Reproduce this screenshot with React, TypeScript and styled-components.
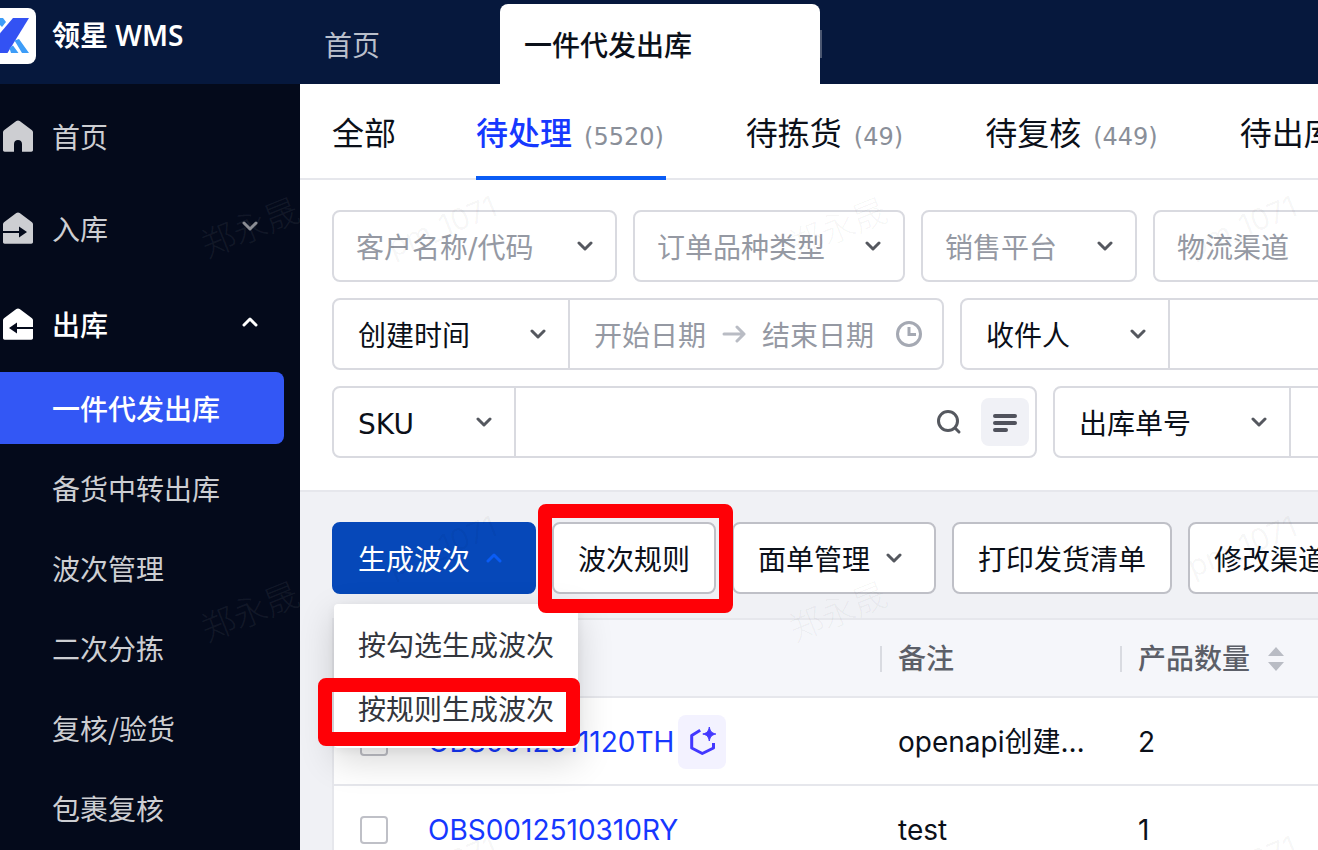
import React from "react";
import styled, { createGlobalStyle, css } from "styled-components";

const cjk = `"Noto Sans CJK SC", sans-serif`;
const uiFont = `"DejaVu Sans", ${cjk}`;
const dataFont = `Inter, ${cjk}`;

const GlobalStyle = createGlobalStyle`
  *, *::before, *::after { box-sizing: border-box; }
  body { margin: 0; font-family: ${cjk}; font-size: 28px; line-height: 40px; color: #0b1019; }
  button, input, select { font: inherit; color: inherit; }
  a { color: inherit; text-decoration: none; }
  ul { list-style: none; margin: 0; padding: 0; }
  svg { flex: none; }
`;

const Shell = styled.div`
  position: relative;
  display: flex;
  flex-direction: column;
  height: 100vh;
  overflow: hidden;
  background: #fff;
`;

const TopBar = styled.header`
  display: flex;
  flex: none;
  height: 84px;
  background: #06183d;
`;

const Brand = styled.div`
  display: flex;
  flex: none;
  gap: 16px;
  width: 300px;
  padding-top: 8px;
  color: #fff;
  font-family: "Noto Sans", ${cjk};
  font-weight: 600;
  line-height: 54px;
`;

const Logo = styled.svg`
  display: block;
  width: 36px;
  height: 56px;
`;

const PageTabs = styled.nav`
  display: flex;
  align-items: flex-end;
`;

const PageTab = styled.a<{ $active?: boolean }>`
  display: flex;
  align-items: center;
  width: ${(p) => (p.$active ? 320 : 200)}px;
  height: 80px;
  padding: 0 24px;
  border-radius: 8px 8px 0 0;
  color: ${(p) => (p.$active ? "#0b1019" : "#b9bfcb")};
  background: ${(p) => (p.$active ? "#fff" : "transparent")};
  font-weight: ${(p) => (p.$active ? 500 : 400)};
`;

const PageTabRule = styled.span`
  align-self: center;
  width: 2px;
  height: 28px;
  margin-top: 4px;
  background: #4b5771;
`;

const Body = styled.div`
  display: flex;
  flex: 1;
  min-height: 0;
`;

const Sidebar = styled.nav`
  flex: none;
  width: 300px;
  padding-top: 6px;
  background: #040a1b;
  overflow: hidden;
`;

const MenuLink = styled.a<{ $open?: boolean }>`
  display: flex;
  align-items: center;
  gap: 18px;
  height: ${(p) => (p.$open ? 96 : 92)}px;
  margin-top: ${(p) => (p.$open ? 2 : 0)}px;
  padding: 0 42px 0 2px;
  color: ${(p) => (p.$open ? "#fff" : "#cdced2")};
  font-weight: ${(p) => (p.$open ? 500 : 400)};
  > span { flex: 1; }
  > span + svg { margin-bottom: 4px; }
`;

const SubList = styled.ul`
  display: flex;
  flex-direction: column;
  gap: 8px;
`;

const SubLink = styled.a<{ $active?: boolean }>`
  display: block;
  height: 72px;
  margin-right: 16px;
  padding-left: 52px;
  border-radius: 0 8px 8px 0;
  line-height: 72px;
  color: ${(p) => (p.$active ? "#fff" : "#cdced2")};
  background: ${(p) => (p.$active ? "#3357f5" : "transparent")};
  font-weight: ${(p) => (p.$active ? 500 : 400)};
`;

const Main = styled.main`
  flex: 1;
  min-width: 0;
  overflow: hidden;
`;

const StatusTabs = styled.nav`
  display: flex;
  gap: 80px;
  height: 96px;
  padding: 0 32px;
  border-bottom: 2px solid #e6e7ec;
`;

const StatusTab = styled.a<{ $active?: boolean }>`
  display: flex;
  flex: none;
  align-items: baseline;
  gap: 12px;
  height: 96px;
  padding-top: 25px;
  font-size: 32px;
  line-height: 44px;
  white-space: nowrap;
  ${(p) =>
    p.$active &&
    css`
      color: #1638ff;
      font-weight: 500;
      border-bottom: 4px solid #0a5cf5;
    `}
`;

const Count = styled.span`
  padding-right: 2px;
  color: #8a8f99;
  font-family: ${uiFont};
  font-size: 24px;
  font-weight: 400;
`;

const Filters = styled.form`
  display: flex;
  flex-direction: column;
  gap: 16px;
  padding: 30px 0 32px 32px;
  border-bottom: 2px solid #e6e7ec;
`;

const FilterRow = styled.div`
  display: flex;
  gap: 16px;
`;

const Group = styled.div<{ $w: number }>`
  display: flex;
  flex: none;
  align-items: center;
  width: ${(p) => p.$w}px;
  height: 72px;
  border: 2px solid #d9dae0;
  border-radius: 8px;
  background: #fff;
`;

const Picker = styled.label<{ $w?: number; $muted?: boolean }>`
  display: grid;
  flex: ${(p) => (p.$w ? "none" : 1)};
  grid-template-columns: 1fr 16px 22px;
  align-items: center;
  width: ${(p) => (p.$w ? `${p.$w}px` : "auto")};
  height: 68px;
  border-right: ${(p) => (p.$w ? "2px solid #d9dae0" : "0")};
  color: ${(p) => (p.$muted ? "#9599a3" : "#0b1019")};
  > select { grid-area: 1 / 1 / 2 / 4; }
  > svg { grid-area: 1 / 2 / 2 / 3; pointer-events: none; }
`;

const Select = styled.select<{ $inset?: number }>`
  appearance: none;
  width: 100%;
  height: 68px;
  padding: 6px 40px 0 ${(p) => p.$inset ?? 22}px;
  border: 0;
  outline: 0;
  background: transparent;
  font-family: ${uiFont};
`;

const TextInput = styled.input<{ $w?: number }>`
  flex: ${(p) => (p.$w ? "none" : 1)};
  width: ${(p) => (p.$w ? `${p.$w}px` : "auto")};
  min-width: 0;
  height: 64px;
  padding: 0;
  border: 0;
  outline: 0;
  background: transparent;
  &::placeholder { color: #9599a3; opacity: 1; }
`;

const DateRange = styled.div`
  display: flex;
  flex: 1;
  align-items: center;
  gap: 16px;
  min-width: 0;
  padding: 0 20px 0 24px;
`;

const IconButton = styled.button<{ $filled?: boolean }>`
  display: grid;
  place-items: center;
  width: 48px;
  height: 48px;
  margin-right: ${(p) => (p.$filled ? 6 : 8)}px;
  padding: 0;
  border: 0;
  border-radius: 8px;
  background: ${(p) => (p.$filled ? "#f0f1f6" : "transparent")};
`;

const ListArea = styled.section`
  min-height: 100%;
  padding: 30px 0 0 32px;
  background: #f0f1f5;
`;

const Toolbar = styled.div`
  display: flex;
  gap: 16px;
  margin-bottom: 24px;
`;

const Anchor = styled.div`
  position: relative;
  flex: none;
`;

const ToolButton = styled.button<{ $primary?: boolean }>`
  display: flex;
  align-items: center;
  gap: 16px;
  height: 72px;
  padding: 0 24px;
  border: 2px solid ${(p) => (p.$primary ? "#0648b9" : "#bfc0c7")};
  border-radius: 8px;
  color: ${(p) => (p.$primary ? "#fff" : "#0b1019")};
  background: ${(p) => (p.$primary ? "#0648b9" : "#fff")};
  white-space: nowrap;
  > svg { margin-right: 8px; }
`;

const Dropdown = styled.ul`
  position: absolute;
  z-index: 2;
  top: 82px;
  left: 2px;
  width: 244px;
  padding: 8px 0;
  border-radius: 4px;
  background: #fff;
  box-shadow: 0 12px 36px rgba(0, 0, 0, 0.16), 0 2px 8px rgba(0, 0, 0, 0.06);
`;

const DropItem = styled.button`
  display: block;
  width: 100%;
  height: 64px;
  padding: 0 24px;
  border: 0;
  background: transparent;
  color: #33363d;
  text-align: left;
  white-space: nowrap;
`;

const Highlight = styled.span<{ $inset: string }>`
  position: absolute;
  z-index: 3;
  inset: ${(p) => p.$inset};
  border: 14px solid #ff0006;
  border-radius: 8px;
  pointer-events: none;
`;

const Table = styled.table`
  width: 100%;
  table-layout: fixed;
  border-collapse: separate;
  border-spacing: 0;
  border-left: 2px solid #e6e7ec;
  border-top: 2px solid #e6e7ec;
  background: #fff;
  font-family: ${dataFont};
`;

const HeadCell = styled.th`
  height: 78px;
  padding: 2px 0 0 16px;
  border-bottom: 2px solid #e6e7ec;
  background: #f5f6fa;
  color: #5c5f68;
  font-weight: 500;
  text-align: left;
`;

const HeadLabel = styled.div`
  display: flex;
  align-items: center;
  gap: 18px;
  height: 26px;
  margin-left: -18px;
  padding-left: 16px;
  border-left: 2px solid #d9dbe1;
`;

const Cell = styled.td`
  height: 88px;
  padding: 2px 0 0 16px;
  border-bottom: 2px solid #e6e7ec;
  white-space: nowrap;
`;

const Check = styled.input`
  appearance: none;
  display: block;
  width: 28px;
  height: 28px;
  margin: 0 0 0 10px;
  border: 2px solid #bfc0c7;
  border-radius: 4px;
  background: #fff;
`;

const OrderCell = styled.div`
  display: flex;
  align-items: center;
  gap: 4px;
  color: #1638ff;
`;

const Tag = styled.span`
  display: grid;
  place-items: center;
  width: 48px;
  height: 54px;
  border-radius: 8px;
  background: #f3f2ff;
`;

const Watermarks = styled.div`
  position: absolute;
  z-index: 5;
  inset: 0;
  overflow: hidden;
  pointer-events: none;
`;

const Mark = styled.span<{ $x: number; $y: number; $dark?: boolean; $name?: boolean }>`
  position: absolute;
  left: ${(p) => p.$x}px;
  top: ${(p) => p.$y}px;
  width: 120px;
  color: ${(p) => (p.$dark ? "rgba(150, 155, 165, 0.1)" : "rgba(0, 0, 0, 0.04)")};
  font-family: Inter, ${cjk};
  font-size: ${(p) => (p.$name ? 34 : 30)}px;
  font-weight: ${(p) => (p.$name ? 300 : 400)};
  text-align: center;
  transform: rotate(-22deg);
`;

const Chevron = ({ up, color = "#55585f" }: { up?: boolean; color?: string }) => (
  <svg width="16" height="12" viewBox="0 0 16 12" fill="none" aria-hidden="true">
    <path d={up ? "M2 9 8 3l6 6" : "M2 3l6 6 6-6"} stroke={color} strokeWidth="3" strokeLinecap="round" strokeLinejoin="round" />
  </svg>
);

const HouseIcon = ({ kind, color = "#cdced2" }: { kind: "home" | "in" | "out"; color?: string }) => (
  <svg width="32" height="32" viewBox="0 0 32 32" aria-hidden="true">
    <path d="M16 .5c.6 0 1.200.2 1.700.6L30 10.200c.7.5 1 1.200 1 2V30c0 1-.7 1.700-1.700 1.700H2.700C1.700 31.700 1 31 1 30V12.200c0-.8.300-1.500 1-2L14.300 1.100C14.800.7 15.400.5 16 .5Z" fill={color} />
    {kind === "home" && <path d="M12 32v-8c0-2.500 1.700-4 4-4s4 1.500 4 4v8Z" fill="#040a1b" />}
    {kind === "in" && <path d="M0 19h17v-4.500l8 5.500-8 5.500V21H0Z" fill="#040a1b" />}
    {kind === "out" && <path d="M32 19H15v-4.500L7 20l8 5.500V21h17Z" fill="#040a1b" />}
  </svg>
);

const Picked = ({ label, w, muted, inset }: { label: string; w?: number; muted?: boolean; inset?: number }) => (
  <Picker $w={w} $muted={muted}>
    <Select aria-label={label} $inset={inset}>
      <option>{label}</option>
    </Select>
    <Chevron />
  </Picker>
);

const subItems = ["一件代发出库", "备货中转出库", "波次管理", "二次分拣", "复核/验货", "包裹复核"];

const statuses = [
  { name: "全部" },
  { name: "待处理", count: "(5520)" },
  { name: "待拣货", count: "(49)" },
  { name: "待复核", count: "(449)" },
  { name: "待出库" },
];

const orders = [
  { id: "OBS0012511120TH", note: "openapi创建…", qty: 2, tagged: true },
  { id: "OBS0012510310RY", note: "test", qty: 1, tagged: false },
];

const marks = [
  { text: "郑永晟", x: 190, y: 208, dark: true, name: true },
  { text: "郑永晟", x: 190, y: 592, dark: true, name: true },
  { text: "郑永晟", x: 778, y: 208, name: true },
  { text: "郑永晟", x: 778, y: 592, name: true },
  { text: "pm_1071", x: 382, y: 206 },
  { text: "pm_1071", x: 382, y: 526 },
  { text: "pm_1071", x: 382, y: 846 },
  { text: "pm_1071", x: 1182, y: 206 },
  { text: "pm_1071", x: 1182, y: 526 },
  { text: "pm_1071", x: 1182, y: 846 },
];

export default function App() {
  return (
    <Shell>
      <GlobalStyle />
      <TopBar>
        <Brand>
          <Logo viewBox="0 0 36 56" aria-hidden="true">
            <rect x="-20" width="56" height="56" rx="8" fill="#fff" />
            <path d="M0 10h3l3 4-4 5-2-2Z" fill="#3d9df8" />
            <path d="M13 10h16L7.500 45H-4V30Z" fill="#3352f3" />
            <path d="M14.500 32.500 19 31l10 14h-7ZM9.500 40l3.500-2.500 5.500 7.500H11Z" fill="#3d9df8" />
          </Logo>
          <span>领星 WMS</span>
        </Brand>
        <PageTabs>
          <PageTab href="#home">首页</PageTab>
          <PageTab href="#dropship" $active>一件代发出库</PageTab>
          <PageTabRule />
        </PageTabs>
      </TopBar>
      <Body>
        <Sidebar>
          <MenuLink href="#home"><HouseIcon kind="home" /><span>首页</span></MenuLink>
          <MenuLink href="#inbound"><HouseIcon kind="in" /><span>入库</span><Chevron color="#8b8d94" /></MenuLink>
          <MenuLink href="#outbound" $open><HouseIcon kind="out" color="#fff" /><span>出库</span><Chevron up color="#fff" /></MenuLink>
          <SubList>
            {subItems.map((name, i) => (
              <li key={name}><SubLink href={`#out-${i}`} $active={i === 0}>{name}</SubLink></li>
            ))}
          </SubList>
        </Sidebar>
        <Main>
          <StatusTabs>
            {statuses.map((s, i) => (
              <StatusTab key={s.name} href={`#status-${i}`} $active={i === 1}>
                {s.name}
                {s.count && <Count>{s.count}</Count>}
              </StatusTab>
            ))}
          </StatusTabs>
          <Filters>
            <FilterRow>
              <Group $w={285}><Picked label="客户名称/代码" muted /></Group>
              <Group $w={272}><Picked label="订单品种类型" muted /></Group>
              <Group $w={216}><Picked label="销售平台" muted /></Group>
              <Group $w={216}><Picked label="物流渠道" muted /></Group>
            </FilterRow>
            <FilterRow>
              <Group $w={612}>
                <Picked label="创建时间" w={236} inset={24} />
                <DateRange>
                  <TextInput $w={112} placeholder="开始日期" aria-label="开始日期" />
                  <svg width="24" height="20" viewBox="0 0 24 20" fill="none" stroke="#b9bcc4" strokeWidth="3" strokeLinecap="round" strokeLinejoin="round" aria-hidden="true">
                    <path d="M2 10h20M15 3l7 7-7 7" />
                  </svg>
                  <TextInput placeholder="结束日期" aria-label="结束日期" />
                  <svg width="26" height="26" viewBox="0 0 26 26" fill="none" stroke="#a5a9b3" strokeWidth="3" aria-hidden="true">
                    <circle cx="13" cy="13" r="11.500" />
                    <path d="M13 6v7.500h7" />
                  </svg>
                </DateRange>
              </Group>
              <Group $w={600}>
                <Picked label="收件人" w={208} inset={24} />
                <TextInput aria-label="收件人" />
              </Group>
            </FilterRow>
            <FilterRow>
              <Group $w={705}>
                <Picked label="SKU" w={182} inset={24} />
                <TextInput aria-label="SKU" />
                <IconButton type="button" aria-label="搜索">
                  <svg width="26" height="26" viewBox="0 0 26 26" fill="none" stroke="#55585f" strokeWidth="3" strokeLinecap="round" aria-hidden="true">
                    <circle cx="12" cy="12" r="9.500" />
                    <path d="m19 19 4 4" />
                  </svg>
                </IconButton>
                <IconButton type="button" aria-label="批量输入" $filled>
                  <svg width="24" height="20" viewBox="0 0 24 20" stroke="#50525c" strokeWidth="4" strokeLinecap="round" aria-hidden="true">
                    <path d="M2 4h20M2 11h20M2 18h11" />
                  </svg>
                </IconButton>
              </Group>
              <Group $w={600}>
                <Picked label="出库单号" w={236} inset={24} />
                <TextInput aria-label="出库单号" />
              </Group>
            </FilterRow>
          </Filters>
          <ListArea>
            <Toolbar>
              <Anchor>
                <ToolButton $primary aria-expanded="true">生成波次<Chevron up color="#0a5cf5" /></ToolButton>
                <Dropdown>
                  <li><DropItem>按勾选生成波次</DropItem></li>
                  <li><DropItem>按规则生成波次</DropItem></li>
                  <Highlight $inset="74px -2px 2px -16px" />
                </Dropdown>
              </Anchor>
              <Anchor>
                <ToolButton>波次规则</ToolButton>
                <Highlight $inset="-18px -17px -19px -14px" />
              </Anchor>
              <Anchor><ToolButton>面单管理<Chevron /></ToolButton></Anchor>
              <Anchor><ToolButton>打印发货清单</ToolButton></Anchor>
              <Anchor><ToolButton>修改渠道</ToolButton></Anchor>
            </Toolbar>
            <Table>
              <colgroup>
                <col style={{ width: 78 }} />
                <col style={{ width: 470 }} />
                <col style={{ width: 240 }} />
                <col />
              </colgroup>
              <thead>
                <tr>
                  <HeadCell><Check type="checkbox" aria-label="全选" /></HeadCell>
                  <HeadCell aria-label="出库单号" />
                  <HeadCell><HeadLabel>备注</HeadLabel></HeadCell>
                  <HeadCell>
                    <HeadLabel>
                      产品数量
                      <svg width="16" height="24" viewBox="0 0 16 24" fill="#b9bcc4" aria-hidden="true">
                        <path d="M8 0l8 9H0ZM8 24l8-9H0Z" />
                      </svg>
                    </HeadLabel>
                  </HeadCell>
                </tr>
              </thead>
              <tbody>
                {orders.map((o) => (
                  <tr key={o.id}>
                    <Cell><Check type="checkbox" aria-label={o.id} /></Cell>
                    <Cell>
                      <OrderCell>
                        <a href={`#${o.id}`}>{o.id}</a>
                        {o.tagged && (
                          <Tag>
                            <svg width="28" height="30" viewBox="0 0 28 30" fill="none" aria-hidden="true">
                              <path d="M12.200 3.200 3.700 8.500V21l10.600 5.500 11.200-5.500v-5" stroke="#4338ff" strokeWidth="3" strokeLinejoin="round" />
                              <path d="M21.300 0c.9 4.500 2.200 5.900 6.500 7-4.300 1.100-5.600 2.500-6.500 7-.9-4.500-2.200-5.900-6.500-7 4.300-1.100 5.600-2.500 6.500-7Z" fill="#4338ff" stroke="#4338ff" strokeWidth="1" />
                            </svg>
                          </Tag>
                        )}
                      </OrderCell>
                    </Cell>
                    <Cell>{o.note}</Cell>
                    <Cell>{o.qty}</Cell>
                  </tr>
                ))}
              </tbody>
            </Table>
          </ListArea>
        </Main>
      </Body>
      <Watermarks aria-hidden="true">
        {marks.map((m) => (
          <Mark key={`${m.x}-${m.y}`} $x={m.x} $y={m.y} $dark={m.dark} $name={m.name}>{m.text}</Mark>
        ))}
      </Watermarks>
    </Shell>
  );
}
